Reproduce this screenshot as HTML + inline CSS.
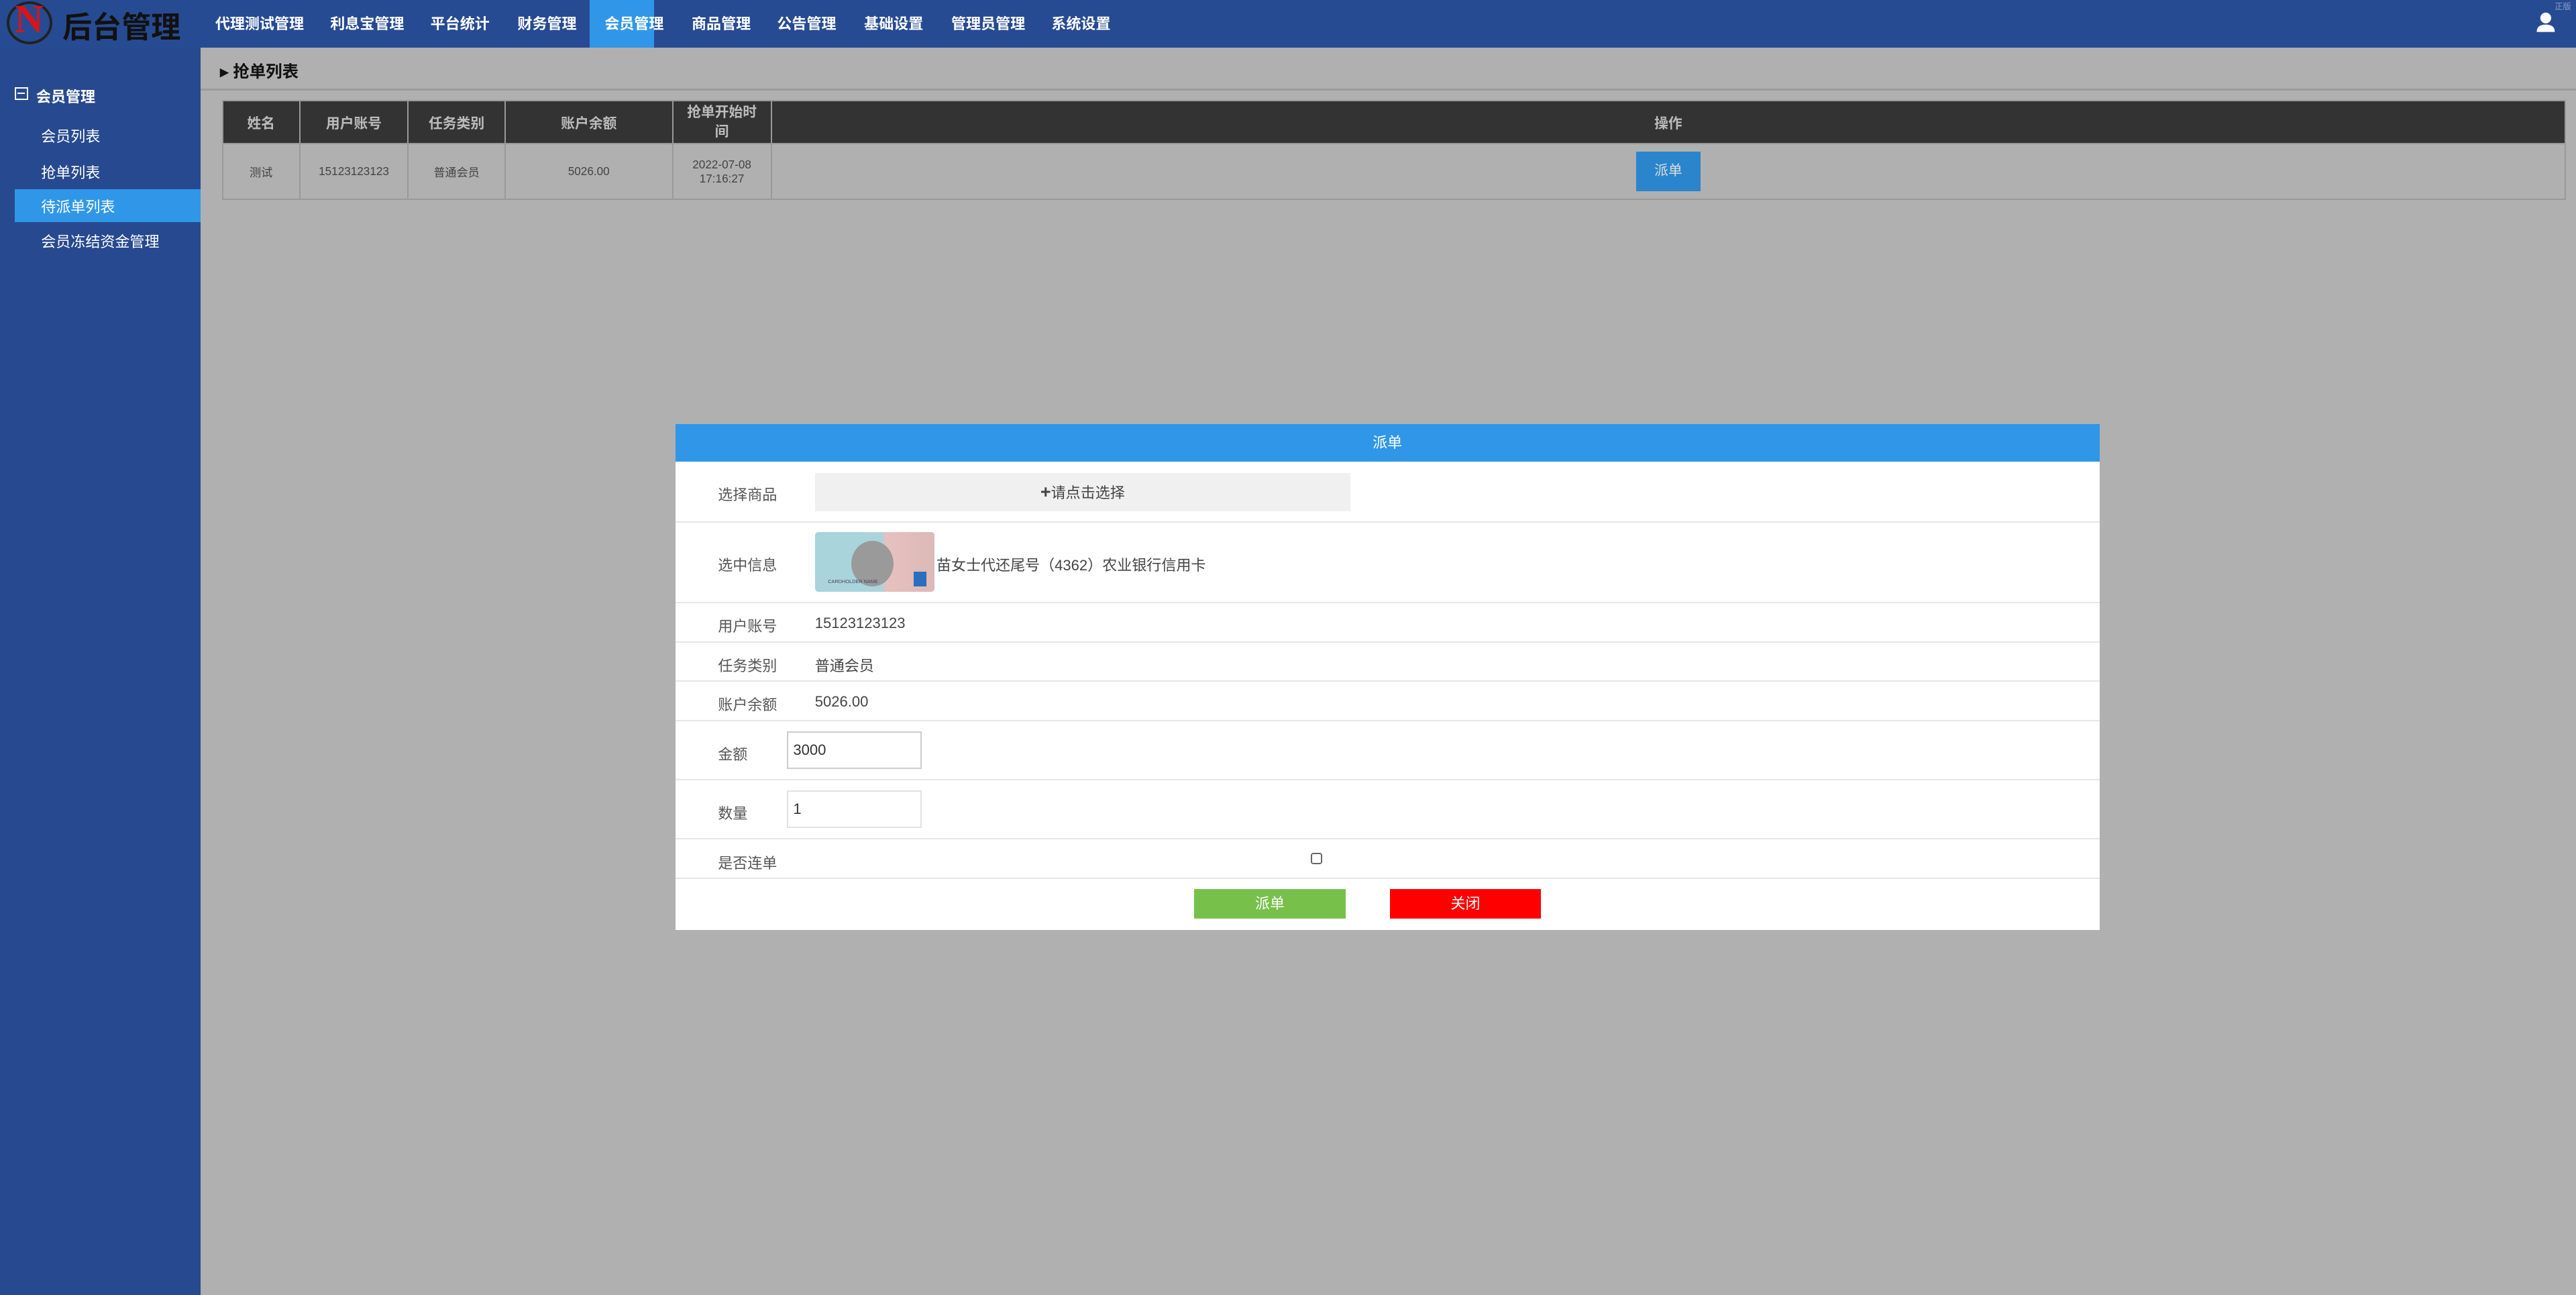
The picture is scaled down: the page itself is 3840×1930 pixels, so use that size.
<!DOCTYPE html>
<html><head><meta charset="utf-8"><style>
*{margin:0;padding:0;box-sizing:border-box}
html,body{width:3840px;height:1930px;overflow:hidden;background:#b0b0b0}
#w{zoom:2.449;width:1568px;height:788px;position:relative;font-family:"Liberation Sans","Noto Sans CJK SC",sans-serif;font-size:9px;color:#333}
.abs{position:absolute}
#top{left:0;top:0;width:1568px;height:29px;background:#274b92}
#side{left:0;top:29px;width:122px;height:759px;background:#27498f}
.nav{top:0;height:29px;line-height:29px;color:#fff;font-weight:bold;font-size:9px;text-align:center}
.sm{color:#fff;font-size:9px;left:25px}
table{border-collapse:collapse;table-layout:fixed}
.t td{border:1px solid #999;text-align:center;font-size:7px;color:#444}
.t tr:first-child td{padding:0 4px}
.lab{left:26px;font-size:9px;color:#555}
.row{left:0;width:867px;border-bottom:1px solid #e6e6e6}
</style></head><body><div id="w">
<div id="top" class="abs"></div>
<div class="abs" style="left:4px;top:1px;width:28px;height:26px;border:2px solid #222;border-radius:50%"></div>
<div class="abs" style="left:9px;top:-2px;font-size:24px;font-weight:bold;color:#d8141a;font-family:'Liberation Serif',serif">N</div>
<div class="abs" style="left:38px;top:2px;font-size:18px;font-weight:bold;color:#111">后台管理</div>
<div class="abs nav" style="left:359px;width:39px;background:#3097e8"></div>
<div class="abs nav" style="left:131px">代理测试管理</div>
<div class="abs nav" style="left:201px">利息宝管理</div>
<div class="abs nav" style="left:262px">平台统计</div>
<div class="abs nav" style="left:315px">财务管理</div>
<div class="abs nav" style="left:368px">会员管理</div>
<div class="abs nav" style="left:421px">商品管理</div>
<div class="abs nav" style="left:473px">公告管理</div>
<div class="abs nav" style="left:526px">基础设置</div>
<div class="abs nav" style="left:579px">管理员管理</div>
<div class="abs nav" style="left:640px">系统设置</div>
<div class="abs" style="left:1555px;top:0;font-size:5px;color:#8aa0cc">正版</div>
<svg class="abs" style="left:1543px;top:7px" width="13" height="13" viewBox="0 0 13 13"><circle cx="6.5" cy="4" r="3.3" fill="#fff"/><path d="M1 12.5 Q1 8 6.5 8 Q12 8 12 12.5Z" fill="#fff"/></svg>
<div id="side" class="abs"></div>
<div class="abs" style="left:9px;top:53px;width:8px;height:8px;border:1px solid #fff;font-size:0"><div style="margin:2.5px 1px;height:1px;background:#fff"></div></div>
<div class="abs" style="left:22px;top:52px;color:#fff;font-weight:bold;font-size:9px">会员管理</div>
<div class="abs sm" style="top:76px">会员列表</div>
<div class="abs sm" style="top:98px">抢单列表</div>
<div class="abs" style="left:9px;top:115px;width:113px;height:20px;background:#3097e8"></div>
<div class="abs sm" style="top:119px">待派单列表</div>
<div class="abs sm" style="top:140px">会员冻结资金管理</div>
<div class="abs" style="left:134px;top:36px;font-size:10px;font-weight:bold;color:#111">▸ 抢单列表</div>
<div class="abs" style="left:122px;top:54px;width:1446px;height:1px;background:#9a9a9a"></div>
<table class="abs t" style="left:135px;top:61px;width:1427px">
<tr style="height:26px;background:#333">
<td style="width:47px;color:#bbb;font-weight:bold;font-size:8.5px">姓名</td><td style="width:66px;color:#bbb;font-weight:bold;font-size:8.5px">用户账号</td><td style="width:59px;color:#bbb;font-weight:bold;font-size:8.5px">任务类别</td><td style="width:102px;color:#bbb;font-weight:bold;font-size:8.5px">账户余额</td><td style="width:60px;color:#bbb;font-weight:bold;font-size:8.5px;line-height:12px">抢单开始时<br>间</td><td style="color:#bbb;font-weight:bold;font-size:8.5px">操作</td></tr>
<tr style="height:34px"><td>测试</td><td>15123123123</td><td>普通会员</td><td>5026.00</td><td>2022-07-08<br>17:16:27</td><td><span style="display:inline-block;width:39px;height:24px;line-height:24px;background:#2a85cc;color:#ddd;font-size:8.5px">派单</span></td></tr>
</table>
<div class="abs" style="left:411px;top:258px;width:867px;height:308px;background:#fff">
<div class="abs" style="left:0;top:0;width:867px;height:23px;background:#3096e8;color:#fff;text-align:center;line-height:23px;font-size:9px">派单</div>
<div class="abs row" style="top:23px;height:37px"></div>
<div class="abs lab" style="top:36px">选择商品</div>
<div class="abs" style="left:85px;top:30px;width:326px;height:23px;background:#f0f0f0;text-align:center;line-height:23px;font-size:9px;color:#444"><b style="font-size:11px">+</b>请点击选择</div>
<div class="abs row" style="top:60px;height:49px"></div>
<div class="abs lab" style="top:79px">选中信息</div>
<div class="abs" style="left:85px;top:66px;width:73px;height:36px;border-radius:2px;background:linear-gradient(90deg,#a9d4dc 0%,#a9d4dc 55%,#e6c1c0 60%,#dcb8b6 100%);overflow:hidden">
<div class="abs" style="left:22px;top:5px;width:26px;height:28px;border-radius:50%;background:#9a9a9a"></div>
<div class="abs" style="left:60px;top:24px;width:8px;height:9px;background:#2a6fbe"></div>
<div class="abs" style="left:8px;top:28px;font-size:3px;color:#446">CARDHOLDER NAME</div></div>
<div class="abs" style="left:159px;top:79px;font-size:9px;color:#444">苗女士代还尾号（4362）农业银行信用卡</div>
<div class="abs row" style="top:109px;height:24px"></div>
<div class="abs lab" style="top:116px">用户账号</div><div class="abs" style="left:85px;top:116px;font-size:9px;color:#444">15123123123</div>
<div class="abs row" style="top:133px;height:24px"></div>
<div class="abs lab" style="top:140px">任务类别</div><div class="abs" style="left:85px;top:140px;font-size:9px;color:#444">普通会员</div>
<div class="abs row" style="top:157px;height:24px"></div>
<div class="abs lab" style="top:164px">账户余额</div><div class="abs" style="left:85px;top:164px;font-size:9px;color:#444">5026.00</div>
<div class="abs row" style="top:181px;height:36px"></div>
<div class="abs lab" style="top:194px">金额</div>
<div class="abs" style="left:68px;top:187px;width:82px;height:23px;border:1px solid #ccc;font-size:9px;line-height:21px;padding-left:3px;color:#333">3000</div>
<div class="abs row" style="top:217px;height:36px"></div>
<div class="abs lab" style="top:230px">数量</div>
<div class="abs" style="left:68px;top:223px;width:82px;height:23px;border:1px solid #e2e2e2;font-size:9px;line-height:21px;padding-left:3px;color:#333">1</div>
<div class="abs row" style="top:253px;height:24px"></div>
<div class="abs lab" style="top:260px">是否连单</div>
<div class="abs" style="left:387px;top:261px;width:7px;height:7px;border:1px solid #666;border-radius:1.5px"></div>
<div class="abs" style="left:316px;top:283px;width:92px;height:18px;background:#77c14a;color:#fff;text-align:center;line-height:18px;font-size:9px">派单</div>
<div class="abs" style="left:435px;top:283px;width:92px;height:18px;background:#ff0000;color:#fff;text-align:center;line-height:18px;font-size:9px">关闭</div>
</div>
</div></body></html>
